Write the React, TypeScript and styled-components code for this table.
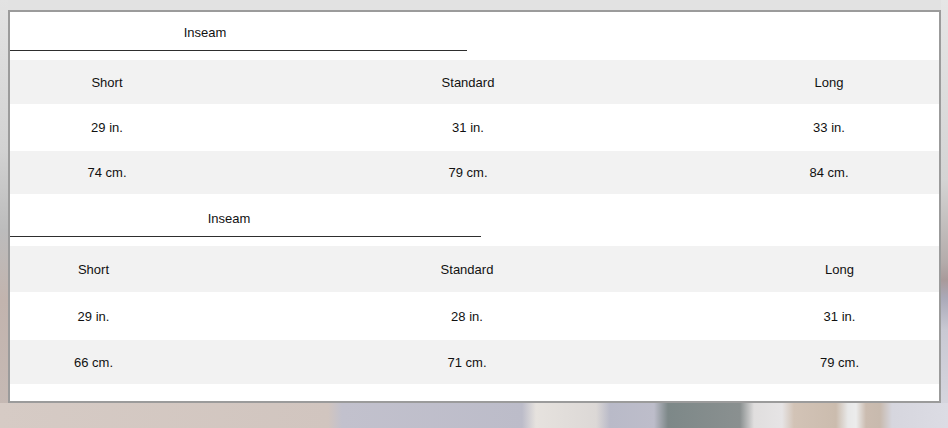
import React from 'react';
import styled, { createGlobalStyle } from 'styled-components';

const Global = createGlobalStyle`
  html, body { margin: 0; padding: 0; }
  body { font-family: "Liberation Sans", Arial, sans-serif; }
`;

const Page = styled.div`
  width: 948px;
  height: 428px;
  box-sizing: border-box;
  padding: 10px 7px 0 8px;
  overflow: hidden;
  background:
    linear-gradient(to right, #d6cbc5 0, #d1c5bf 328px, #c2c1cd 342px, #bcbcc9 522px, #e6e2de 536px, #dcd8d6 596px, #b9bac8 610px, #bdbdca 654px, #7d8888 668px, #8a9090 740px, #e0dede 754px, #e6e4e5 782px, #d2c3b6 794px, #cbbcae 836px, #e8e8e8 848px, #ececec 856px, #cbbcb0 866px, #c8baae 880px, #d6d6de 892px, #dcdce4 948px) left bottom / 100% 25px no-repeat,
    linear-gradient(to bottom, #e3e3e3 0, #d2d2d2 150px, #bcbcbc 230px, #c2b4ae 300px, #c6bab5 428px) left top / 8px 100% no-repeat,
    linear-gradient(to bottom, #e6e6e6 0, #d4d4d4 180px, #b4acab 262px, #a99a9a 280px, #aaa9b8 298px, #c9c9d3 330px, #d9d9e1 428px) right top / 7px 100% no-repeat,
    #e2e2e2;
`;

const Modal = styled.div`
  width: 933px;
  height: 393px;
  box-sizing: border-box;
  border: 2px solid #9b9b9b;
  background: #fff;
  display: flex;
  flex-direction: column;
  color: #111;
  font-size: 13px;
  line-height: 15px;
`;

const SizeTable = styled.div`
  display: flex;
  flex-direction: column;
`;

const HeaderCell = styled.div<{ $w: number; $h: number }>`
  width: ${p => p.$w}px;
  height: ${p => p.$h}px;
  box-sizing: border-box;
  border-bottom: 1px solid #2e2e2e;
  display: flex;
  align-items: flex-end;
  padding-bottom: 10px;
  margin-bottom: 9px;
`;

const HeaderLabel = styled.div<{ $w: number }>`
  width: ${p => p.$w}px;
  text-align: center;
`;

const Row = styled.div<{ $cols: string; $h: number; $alt: boolean }>`
  display: grid;
  grid-template-columns: ${p => p.$cols};
  height: ${p => p.$h}px;
  align-items: center;
  background: ${p => (p.$alt ? '#f2f2f2' : '#ffffff')};
`;

const Cell = styled.div`
  text-align: center;
  white-space: nowrap;
`;

const BottomSpace = styled.div`
  flex: 1;
`;

type TableData = {
  lineW: number;
  labelW: number;
  headH: number;
  cols: string;
  heights: number[];
  rows: string[][];
};

const tables: TableData[] = [
  {
    lineW: 457,
    labelW: 390,
    headH: 39,
    cols: '194px 528px 194px 1fr',
    heights: [44, 47, 43],
    rows: [
      ['Short', 'Standard', 'Long'],
      ['29 in.', '31 in.', '33 in.'],
      ['74 cm.', '79 cm.', '84 cm.'],
    ],
  },
  {
    lineW: 471,
    labelW: 438,
    headH: 43,
    cols: '167px 580px 165px 1fr',
    heights: [46, 48, 44],
    rows: [
      ['Short', 'Standard', 'Long'],
      ['29 in.', '28 in.', '31 in.'],
      ['66 cm.', '71 cm.', '79 cm.'],
    ],
  },
];

export default function App() {
  return (
    <>
      <Global />
      <Page>
        <Modal>
          {tables.map((t, ti) => (
            <SizeTable key={ti}>
              <HeaderCell $w={t.lineW} $h={t.headH}>
                <HeaderLabel $w={t.labelW}>Inseam</HeaderLabel>
              </HeaderCell>
              {t.rows.map((r, ri) => (
                <Row key={ri} $cols={t.cols} $h={t.heights[ri]} $alt={ri !== 1}>
                  {r.map((c, ci) => (
                    <Cell key={ci}>{c}</Cell>
                  ))}
                </Row>
              ))}
            </SizeTable>
          ))}
          <BottomSpace />
        </Modal>
      </Page>
    </>
  );
}
